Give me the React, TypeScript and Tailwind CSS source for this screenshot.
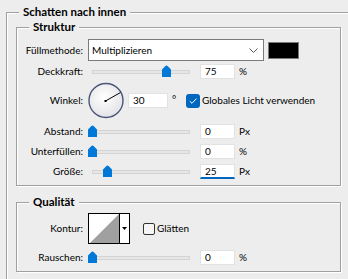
import React from "react";

const groupBorder =
  "relative border border-[#a0a0a0] shadow-[1px_1px_0_#ffffff,inset_1px_1px_0_#ffffff]";

function Legend({ children }: { children: React.ReactNode }) {
  return (
    <span className="absolute -top-[9px] left-[12px] px-[4px] bg-[#ededed] font-bold text-[11.5px] leading-[16px] whitespace-nowrap">
      {children}
    </span>
  );
}

function Label({ children }: { children: React.ReactNode }) {
  return <div className="w-[66px] shrink-0 text-right whitespace-nowrap">{children}</div>;
}

function Thumb() {
  return (
    <svg width="9" height="12" viewBox="0 0 9 12" className="block">
      <path d="M0 12V4.5L3.4 1.1Q4.5 0 5.6 1.1L9 4.5V12Z" fill="#0078d7" />
    </svg>
  );
}

function Slider({ offset }: { offset: number }) {
  return (
    <div className="relative w-[106px] h-[12px] ml-[5px] shrink-0">
      {/* groove */}
      <div className="absolute left-[4px] top-[5px] w-[98px] h-[4px] bg-[#e6e6e6] border border-[#d4d4d4]" />
      <div className="absolute top-0" style={{ left: offset }}>
        <Thumb />
      </div>
    </div>
  );
}

function NumberBox({ value, focused, width = "w-[35px]" }: { value: string; focused?: boolean; width?: string }) {
  return (
    <div
      className={`${width} h-[15px] shrink-0 bg-white border border-[#e2e2e2] pl-[4px] leading-[13px] ${
        focused ? "border-b-2 border-b-[#0067c0]" : ""
      }`}
    >
      {value}
    </div>
  );
}

function SliderRow({ label, offset, value, unit, focused }: { label: string; offset: number; value: string; unit: string; focused?: boolean }) {
  return (
    <div className="flex items-center h-[20px]">
      <Label>{label}</Label>
      <Slider offset={offset} />
      <div className="ml-[6px]">
        <NumberBox value={value} focused={focused} />
      </div>
      <span className="ml-[4px]">{unit}</span>
    </div>
  );
}

function Dial() {
  // 30 degree angle, line from centre to rim
  return (
    <svg width="36" height="37" viewBox="0 0 36 37" className="block shrink-0">
      <defs>
        <radialGradient id="dialFill" cx="0.45" cy="0.4" r="0.6">
          <stop offset="0" stopColor="#ffffff" />
          <stop offset="1" stopColor="#e4e4e8" />
        </radialGradient>
      </defs>
      <circle cx="18" cy="18.5" r="17" fill="url(#dialFill)" stroke="#4a5676" strokeWidth="1.4" />
      <line x1="17.5" y1="19" x2="32.5" y2="10.5" stroke="#000" strokeWidth="1" />
      <rect x="16.5" y="18" width="2" height="2" fill="#000" />
    </svg>
  );
}

function BlueCheck() {
  return (
    <div className="w-[14px] h-[14px] shrink-0 rounded-[3px] bg-[#0067c0] flex items-center justify-center">
      <svg width="10" height="10" viewBox="0 0 10 10">
        <path d="M1.8 5.2L4 7.3L8.4 2.6" fill="none" stroke="#fff" strokeWidth="1" />
      </svg>
    </div>
  );
}

function ContourSwatch() {
  return (
    <div className="flex w-[42px] h-[31px] shrink-0 border border-black bg-white">
      <svg width="30" height="29" viewBox="0 0 30 29" className="block">
        <path d="M1 29L30 0V29Z" fill="#a0a0a0" />
      </svg>
      <div className="flex-1 border-l border-black flex items-center justify-center">
        <svg width="5" height="3" viewBox="0 0 5 3">
          <path d="M0 0H5L2.5 3Z" fill="#000" />
        </svg>
      </div>
    </div>
  );
}

export default function App() {
  return (
    <div className="w-[348px] h-[279px] overflow-hidden bg-[#ededed] text-black text-[10px] font-['Lato',sans-serif]">
      <div className="pt-[12px] pl-[6px]">
        {/* Outer group: Schatten nach innen */}
        <div className="relative w-[360px] border-t border-l border-[#a0a0a0] shadow-[inset_1px_1px_0_#ffffff] pt-[14px] pl-[9px] pb-[40px]">
          <Legend>Schatten nach innen</Legend>

          {/* Struktur */}
          <div className={`${groupBorder} w-[325px] pt-[10px] pb-[4px]`}>
            <Legend>Struktur</Legend>

            <div className="flex items-center h-[24px]">
              <Label>Füllmethode:</Label>
              <div className="ml-[5px] w-[176px] h-[22px] shrink-0 bg-white border border-[#7a7a7a] flex items-center pl-[3px] pr-[5px]">
                <span className="flex-1">Multiplizieren</span>
                <svg width="9" height="5" viewBox="0 0 9 5">
                  <path d="M0.5 0.5L4.5 4.5L8.5 0.5" fill="none" stroke="#5a5a5a" strokeWidth="1" />
                </svg>
              </div>
              <div className="ml-[4px] w-[31px] h-[17px] bg-black border border-[#7a7a7a]" />
            </div>

            <div className="flex items-center h-[18px]">
              <Label>Deckkraft:</Label>
              <Slider offset={74} />
              <div className="ml-[6px]">
                <NumberBox value="75" />
              </div>
              <span className="ml-[4px]">%</span>
            </div>

            <div className="flex items-center h-[41px]">
              <Label>Winkel:</Label>
              <div className="ml-[5px]">
                <Dial />
              </div>
              <div className="ml-[4px]">
                <NumberBox value="30" width="w-[40px]" />
              </div>
              <span className="ml-[4px] w-[14px] self-start mt-[12px]">°</span>
              <BlueCheck />
              <span className="ml-[2px] whitespace-nowrap">Globales Licht verwenden</span>
            </div>

            <SliderRow label="Abstand:" offset={0} value="0" unit="Px" />
            <SliderRow label="Unterfüllen:" offset={0} value="0" unit="%" />
            <SliderRow label="Größe:" offset={15} value="25" unit="Px" focused />
          </div>

          {/* Qualität */}
          <div className={`${groupBorder} w-[325px] mt-[16px] pt-[10px] pb-[4px]`}>
            <Legend>Qualität</Legend>

            <div className="flex items-center">
              <Label>Kontur:</Label>
              <div className="ml-[5px]">
                <ContourSwatch />
              </div>
              <div className="ml-[13px] w-[12px] h-[12px] rounded-[2px] border border-[#333333] bg-[#f5f5f5]" />
              <span className="ml-[2px]">Glätten</span>
            </div>

            <div className="mt-[3px]">
              <SliderRow label="Rauschen:" offset={0} value="0" unit="%" />
            </div>
          </div>
        </div>
      </div>
    </div>
  );
}
